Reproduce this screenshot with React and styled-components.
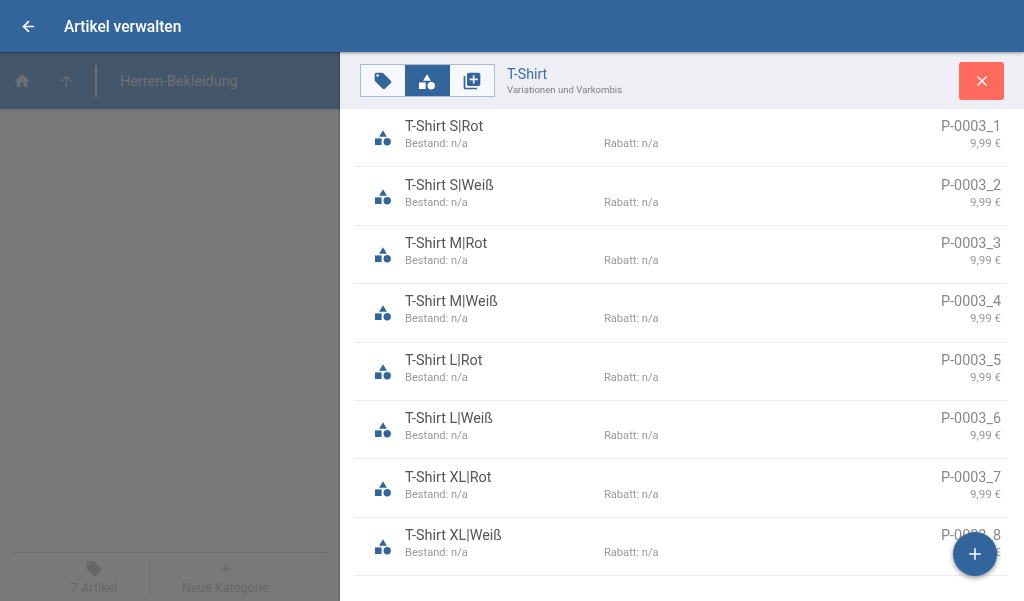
import React from 'react';
import styled, { createGlobalStyle } from 'styled-components';
import { ArrowLeft, ArrowUp, Plus, X } from 'lucide-react';

const GlobalStyle = createGlobalStyle`
  html, body {
    margin: 0;
    padding: 0;
    height: 100%;
    overflow: hidden;
  }
  body {
    font-family: Roboto, "Liberation Sans", sans-serif;
  }
  #root {
    height: 100%;
  }
`;

const Page = styled.div`
  width: 1024px;
  height: 601px;
  display: flex;
  flex-direction: column;
  overflow: hidden;
  filter: blur(0.45px);
`;

const TopBar = styled.header`
  height: 52px;
  flex: none;
  display: flex;
  align-items: center;
  padding-left: 20px;
  background: #31659c;
  color: #fff;
  box-shadow: 0 1px 3px rgba(0, 0, 0, 0.4);
  position: relative;
  z-index: 2;
`;

const Title = styled.h1`
  margin: 2px 0 0 27px;
  font-size: 15.6px;
  font-weight: 500;
`;

const Body = styled.div`
  flex: 1;
  display: flex;
  min-height: 0;
`;

const LeftPane = styled.aside`
  width: 340px;
  flex: none;
  display: flex;
  flex-direction: column;
  background: #797979;
`;

const Breadcrumb = styled.div`
  height: 58px;
  flex: none;
  display: flex;
  align-items: center;
  padding: 1px 0 0 13px;
  background: #46566a;
  color: #6b7076;
  border-bottom: 1px solid #6d7074;
  box-sizing: border-box;
`;

const BreadcrumbUp = styled.span`
  display: flex;
  margin-left: 27px;
`;

const VDivider = styled.span`
  width: 2px;
  height: 32px;
  margin: 0 23px 0 20px;
  background: #6b7076;
`;

const BreadcrumbText = styled.span`
  font-size: 14.4px;
`;

const LeftFill = styled.div`
  flex: 1;
`;

const LeftFooter = styled.div`
  height: 48px;
  flex: none;
  margin: 0 13px;
  padding: 0 26px;
  display: grid;
  grid-template-columns: 110px 152px;
  border-top: 1px solid #6f6f6f;
  color: #666;
`;

const FooterItem = styled.div`
  display: flex;
  flex-direction: column;
  align-items: center;
  font-size: 12.7px;
  gap: 2px;
  margin: 7px 0 6px;
  border-left: ${(p) => (p.$divided ? '1px solid #6f6f6f' : 'none')};
`;

const RightPane = styled.main`
  flex: 1;
  min-width: 0;
  display: flex;
  flex-direction: column;
  background: #fff;
  position: relative;
  box-shadow: -1px 0 2px rgba(0, 0, 0, 0.25);
`;

const PanelHeader = styled.div`
  height: 57px;
  flex: none;
  display: flex;
  align-items: center;
  padding: 0 20px;
  background: #eeeff5;
`;

const TabGroup = styled.div`
  display: flex;
  height: 33px;
  width: 135px;
  box-sizing: border-box;
  border: 1.5px solid #a9bcd3;
  background: #f7f8fb;
`;

const Tab = styled.button`
  flex: 1;
  padding: 0;
  border: none;
  display: flex;
  align-items: center;
  justify-content: center;
  background: ${(p) => (p.$active ? '#31659c' : 'transparent')};
  color: ${(p) => (p.$active ? '#fff' : '#31659c')};
`;

const HeaderText = styled.div`
  flex: 1;
  margin-left: 12px;
  display: flex;
  flex-direction: column;
`;

const HeaderTitle = styled.span`
  font-size: 14.2px;
  line-height: 18px;
  color: #3a6fa5;
`;

const HeaderSub = styled.span`
  font-size: 9.6px;
  line-height: 13px;
  color: #7d8085;
`;

const CloseButton = styled.button`
  width: 45px;
  height: 38px;
  padding: 0;
  border: none;
  border-radius: 3px;
  display: flex;
  align-items: center;
  justify-content: center;
  background: #ff6a5f;
  color: #fff;
`;

const List = styled.ul`
  list-style: none;
  margin: 0 17px 0 14px;
  padding: 0;
`;

const Row = styled.li`
  height: 58.4px;
  box-sizing: border-box;
  display: flex;
  align-items: center;
  padding: 0 6px 0 20px;
  border-bottom: 1px solid #ececec;
`;

const RowIcon = styled.span`
  width: 31px;
  display: flex;
  margin-bottom: 1px;
  color: #31659c;
`;

const RowMain = styled.div`
  flex: 1;
  display: grid;
  grid-template-columns: 199px 1fr auto;
  row-gap: 1px;
  align-items: baseline;
  margin-top: -6px;
`;

const RowTitle = styled.span`
  grid-column: 1 / 3;
  font-size: 14.4px;
  line-height: 17px;
  color: #555;
`;

const RowCode = styled.span`
  font-size: 14.4px;
  line-height: 17px;
  color: #888;
  text-align: right;
`;

const RowMeta = styled.span`
  font-size: ${(p) => (p.$right ? '11.5px' : '11.1px')};
  line-height: 14px;
  color: #999;
  text-align: ${(p) => (p.$right ? 'right' : 'left')};
`;

const Fab = styled.button`
  position: absolute;
  right: 27px;
  bottom: 25px;
  width: 44px;
  height: 44px;
  padding: 0;
  border: none;
  border-radius: 50%;
  display: flex;
  align-items: center;
  justify-content: center;
  background: #31659c;
  color: #fff;
  box-shadow: 0 2px 5px rgba(0, 0, 0, 0.4);
`;

const HomeIcon = () => (
  <svg width="18" height="18" viewBox="0 0 24 24" fill="currentColor">
    <path d="M10 20v-6h4v6h5v-8h3L12 3 2 12h3v8z" />
  </svg>
);

const TagIcon = ({ size = 20 }) => (
  <svg width={size} height={size} viewBox="0 0 24 24" fill="currentColor">
    <path d="M21.41 11.58l-9-9C12.05 2.22 11.55 2 11 2H4c-1.1 0-2 .9-2 2v7c0 .55.22 1.05.59 1.42l9 9c.36.36.86.58 1.41.58s1.05-.22 1.41-.59l7-7c.37-.36.59-.86.59-1.41s-.23-1.06-.59-1.42zM5.5 7C4.67 7 4 6.33 4 5.5S4.67 4 5.5 4 7 4.67 7 5.5 6.33 7 5.5 7z" />
  </svg>
);

const ShapesIcon = () => (
  <svg width="18" height="18" viewBox="0 0 18 18" fill="currentColor">
    <path d="M9 2.2l3.9 6.6H5.1z" />
    <rect x="1" y="10.4" width="6.6" height="6.6" />
    <circle cx="13.2" cy="13.7" r="3.7" />
  </svg>
);

const LibraryAddIcon = () => (
  <svg width="20" height="20" viewBox="0 0 24 24" fill="currentColor">
    <path d="M4 6H2v14c0 1.1.9 2 2 2h14v-2H4V6zm16-4H8c-1.1 0-2 .9-2 2v12c0 1.1.9 2 2 2h12c1.1 0 2-.9 2-2V4c0-1.1-.9-2-2-2zm-1 9h-4v4h-2v-4H9V9h4V5h2v4h4v2z" />
  </svg>
);

const variations = [
  ['T-Shirt S|Rot', 'P-0003_1'],
  ['T-Shirt S|Weiß', 'P-0003_2'],
  ['T-Shirt M|Rot', 'P-0003_3'],
  ['T-Shirt M|Weiß', 'P-0003_4'],
  ['T-Shirt L|Rot', 'P-0003_5'],
  ['T-Shirt L|Weiß', 'P-0003_6'],
  ['T-Shirt XL|Rot', 'P-0003_7'],
  ['T-Shirt XL|Weiß', 'P-0003_8'],
];

export default function App() {
  return (
    <Page>
      <GlobalStyle />
      <TopBar>
        <ArrowLeft size={17} strokeWidth={2.4} />
        <Title>Artikel verwalten</Title>
      </TopBar>
      <Body>
        <LeftPane>
          <Breadcrumb>
            <HomeIcon />
            <BreadcrumbUp>
              <ArrowUp size={17} strokeWidth={1.6} />
            </BreadcrumbUp>
            <VDivider />
            <BreadcrumbText>Herren-Bekleidung</BreadcrumbText>
          </Breadcrumb>
          <LeftFill />
          <LeftFooter>
            <FooterItem>
              <TagIcon size={18} />
              <span>7 Artikel</span>
            </FooterItem>
            <FooterItem $divided>
              <Plus size={18} strokeWidth={1.4} />
              <span>Neue Kategorie</span>
            </FooterItem>
          </LeftFooter>
        </LeftPane>
        <RightPane>
          <PanelHeader>
            <TabGroup>
              <Tab>
                <TagIcon />
              </Tab>
              <Tab $active>
                <ShapesIcon />
              </Tab>
              <Tab>
                <LibraryAddIcon />
              </Tab>
            </TabGroup>
            <HeaderText>
              <HeaderTitle>T-Shirt</HeaderTitle>
              <HeaderSub>Variationen und Varkombis</HeaderSub>
            </HeaderText>
            <CloseButton>
              <X size={16} strokeWidth={2} />
            </CloseButton>
          </PanelHeader>
          <List>
            {variations.map(([name, code]) => (
              <Row key={code}>
                <RowIcon>
                  <ShapesIcon />
                </RowIcon>
                <RowMain>
                  <RowTitle>{name}</RowTitle>
                  <RowCode>{code}</RowCode>
                  <RowMeta>Bestand: n/a</RowMeta>
                  <RowMeta>Rabatt: n/a</RowMeta>
                  <RowMeta $right>9,99 €</RowMeta>
                </RowMain>
              </Row>
            ))}
          </List>
          <Fab>
            <Plus size={18} strokeWidth={2} />
          </Fab>
        </RightPane>
      </Body>
    </Page>
  );
}
